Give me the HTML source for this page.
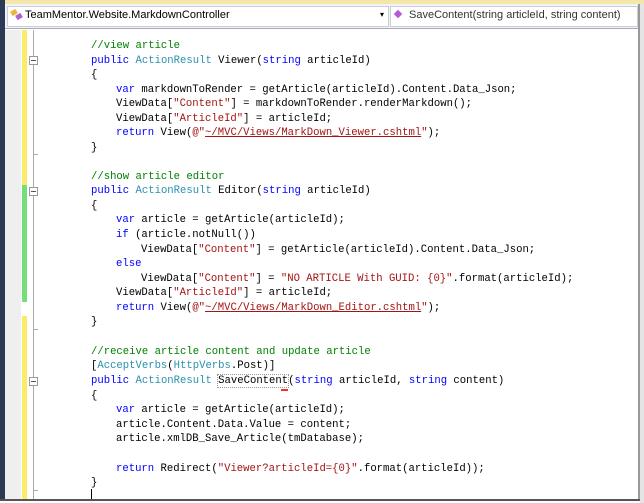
<!DOCTYPE html>
<html><head><meta charset="utf-8"><style>
body{margin:0;width:644px;height:503px;overflow:hidden;background:#fff;position:relative;font-family:"Liberation Sans",sans-serif}
.abs{position:absolute}
.code{position:absolute;left:0;top:0;font-family:"Liberation Mono",monospace;font-size:10.6px;white-space:pre;color:#000}
.ln{position:absolute;height:14px;line-height:14px}
.k{color:#0000ff}.t{color:#2b91af}.s{color:#a31515}.c{color:#008000}
.box{position:absolute;left:29px;width:7px;height:7px;border:1px solid #999;background:#fff}
.box:after{content:"";position:absolute;left:1px;top:3px;width:5px;height:1px;background:#555}
</style></head><body>
<div class="abs" style="left:0;top:0;width:644px;height:4px;background:#f3e6a8"></div>
<div class="abs" style="left:0;top:0;width:5px;height:500px;background:#2b3a55"></div>
<div class="abs" style="left:5px;top:4px;width:634px;height:24px;background:#f2f3f7;border-bottom:1px solid #aab"></div>
<div class="abs" style="left:7px;top:6px;width:380px;height:19px;background:#fff;border:1px solid #ccd"></div>
<div class="abs" style="left:390px;top:6px;width:246px;height:19px;background:#fff;border:1px solid #ccd"></div>
<div class="abs" style="left:10px;top:8px;width:12px;height:12px;"><div class="abs" style="left:1px;top:2px;width:6px;height:5px;background:#e6b93b;transform:rotate(-30deg)"></div><div class="abs" style="left:6px;top:6px;width:6px;height:5px;background:#b060d0;transform:rotate(-30deg)"></div></div>
<div class="abs" style="left:25px;top:9px;font-size:11px;color:#000">TeamMentor.Website.MarkdownController</div>
<div class="abs" style="left:380px;top:10px;font-size:8px">▾</div>
<div class="abs" style="left:395px;top:11px;width:6px;height:6px;background:#b35bd6;transform:rotate(45deg)"></div>
<div class="abs" style="left:409px;top:9px;font-size:11px;color:#333">SaveContent(string articleId, string content)</div>
<div class="abs" style="left:5px;top:30px;width:16px;height:469px;background:#efefef"></div>
<div class="abs" style="left:22px;top:30px;width:5px;height:155px;background:#fbeb6a"></div>
<div class="abs" style="left:22px;top:185px;width:5px;height:117px;background:#73de7a"></div>
<div class="abs" style="left:22px;top:316px;width:5px;height:183px;background:#fbeb6a"></div>
<div class="abs" style="left:33px;top:30px;width:1px;height:469px;background:#aaa"></div>
<div class="box" style="top:56px"></div>
<div class="box" style="top:187px"></div>
<div class="box" style="top:377px"></div>
<div class="abs" style="left:34px;top:154px;width:4px;height:1px;background:#aaa"></div>
<div class="abs" style="left:34px;top:329px;width:4px;height:1px;background:#aaa"></div>
<div class="abs" style="left:34px;top:490px;width:4px;height:1px;background:#aaa"></div>
<div class="abs" style="left:638px;top:4px;width:2px;height:496px;background:#999"></div>
<div class="abs" style="left:640px;top:4px;width:4px;height:499px;background:#e4e4e4"></div>
<div class="abs" style="left:0;top:499px;width:640px;height:2px;background:#555"></div>
<div class="abs" style="left:91px;top:489px;width:1px;height:10px;background:#000"></div>
<div class="code">
<div class="ln" style="left:91px;top:39px"><span class="c">//view article</span></div>
<div class="ln" style="left:91px;top:54px"><span class="k">public</span> <span class="t">ActionResult</span> Viewer(<span class="k">string</span> articleId)</div>
<div class="ln" style="left:91px;top:68px">{</div>
<div class="ln" style="left:116px;top:83px"><span class="k">var</span> markdownToRender = getArticle(articleId).Content.Data_Json;</div>
<div class="ln" style="left:116px;top:97px">ViewData[<span class="s">"Content"</span>] = markdownToRender.renderMarkdown();</div>
<div class="ln" style="left:116px;top:112px">ViewData[<span class="s">"ArticleId"</span>] = articleId;</div>
<div class="ln" style="left:116px;top:126px"><span class="k">return</span> View(<span class="s">@"<u>~/MVC/Views/MarkDown_Viewer.cshtml</u>"</span>);</div>
<div class="ln" style="left:91px;top:141px">}</div>
<div class="ln" style="left:91px;top:170px"><span class="c">//show article editor</span></div>
<div class="ln" style="left:91px;top:184px"><span class="k">public</span> <span class="t">ActionResult</span> Editor(<span class="k">string</span> articleId)</div>
<div class="ln" style="left:91px;top:199px">{</div>
<div class="ln" style="left:116px;top:213px"><span class="k">var</span> article = getArticle(articleId);</div>
<div class="ln" style="left:116px;top:228px"><span class="k">if</span> (article.notNull())</div>
<div class="ln" style="left:141px;top:243px">ViewData[<span class="s">"Content"</span>] = getArticle(articleId).Content.Data_Json;</div>
<div class="ln" style="left:116px;top:257px"><span class="k">else</span></div>
<div class="ln" style="left:141px;top:272px">ViewData[<span class="s">"Content"</span>] = <span class="s">"NO ARTICLE With GUID: {0}"</span>.format(articleId);</div>
<div class="ln" style="left:116px;top:286px">ViewData[<span class="s">"ArticleId"</span>] = articleId;</div>
<div class="ln" style="left:116px;top:301px"><span class="k">return</span> View(<span class="s">@"<u>~/MVC/Views/MarkDown_Editor.cshtml</u>"</span>);</div>
<div class="ln" style="left:91px;top:315px">}</div>
<div class="ln" style="left:91px;top:345px"><span class="c">//receive article content and update article</span></div>
<div class="ln" style="left:91px;top:359px">[<span class="t">AcceptVerbs</span>(<span class="t">HttpVerbs</span>.Post)]</div>
<div class="ln" style="left:91px;top:374px"><span class="k">public</span> <span class="t">ActionResult</span> <span style="outline:1px dotted #999">SaveContent</span>(<span class="k">string</span> articleId, <span class="k">string</span> content)</div>
<div class="ln" style="left:91px;top:389px">{</div>
<div class="ln" style="left:116px;top:403px"><span class="k">var</span> article = getArticle(articleId);</div>
<div class="ln" style="left:116px;top:418px">article.Content.Data.Value = content;</div>
<div class="ln" style="left:116px;top:432px">article.xmlDB_Save_Article(tmDatabase);</div>
<div class="ln" style="left:116px;top:462px"><span class="k">return</span> Redirect(<span class="s">"Viewer?articleId={0}"</span>.format(articleId));</div>
<div class="ln" style="left:91px;top:476px">}</div>
</div>
<div class="abs" style="left:281px;top:389px;width:7px;height:2px;background:#e33"></div>
</body></html>
